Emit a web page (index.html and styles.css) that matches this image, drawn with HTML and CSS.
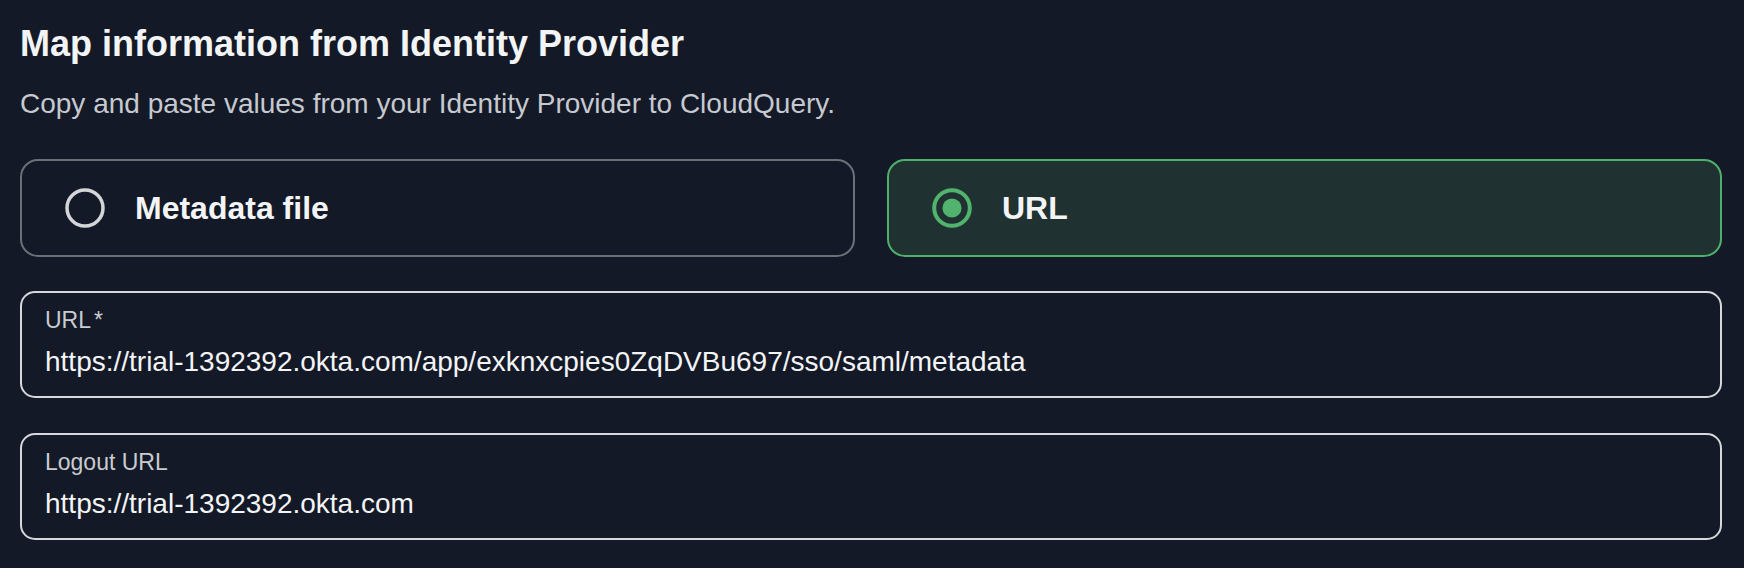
FILE: index.html
```html
<!DOCTYPE html>
<html lang="en">
<head>
<meta charset="utf-8">
<title>Map information from Identity Provider</title>
<link rel="stylesheet" href="styles.css">
</head>
<body>
<main class="page">
  <h1 class="title">Map information from Identity Provider</h1>
  <p class="subtitle">Copy and paste values from your Identity Provider to CloudQuery.</p>

  <div class="options">
    <label class="option">
      <svg class="radio" viewBox="0 0 40 40" width="40" height="40" aria-hidden="true">
        <circle cx="20" cy="20" r="18" fill="none" stroke="#d4d5d8" stroke-width="3.5"/>
      </svg>
      <span class="option-text">Metadata file</span>
    </label>
    <label class="option option-selected">
      <svg class="radio" viewBox="0 0 40 40" width="40" height="40" aria-hidden="true">
        <circle cx="20" cy="20" r="17.8" fill="none" stroke="#52b36e" stroke-width="4"/>
        <circle cx="20" cy="20" r="9.6" fill="#52b36e"/>
      </svg>
      <span class="option-text">URL</span>
    </label>
  </div>

  <div class="field field-first">
    <div class="field-label">URL<span class="req">*</span></div>
    <div class="field-value">https://trial-1392392.okta.com/app/exknxcpies0ZqDVBu697/sso/saml/metadata</div>
  </div>

  <div class="field">
    <div class="field-label">Logout URL</div>
    <div class="field-value">https://trial-1392392.okta.com</div>
  </div>
</main>
</body>
</html>
```

FILE: styles.css
```css
html, body {
  margin: 0;
  padding: 0;
  background: #131926;
}

body {
  font-family: "Liberation Sans", Arial, Helvetica, sans-serif;
  color: #f3f4f6;
}

.page {
  padding: 22px 22px 0 20px;
}

.title {
  margin: 0;
  font-size: 36px;
  line-height: 44px;
  font-weight: 700;
  color: #f3f4f6;
}

.subtitle {
  margin: 20px 0 0;
  font-size: 28px;
  line-height: 36px;
  color: #c6c9cf;
}

.options {
  margin-top: 37px;
  display: grid;
  grid-template-columns: 1fr 1fr;
  gap: 32px;
}

.option {
  box-sizing: border-box;
  height: 98px;
  display: flex;
  align-items: center;
  gap: 30px;
  padding-left: 43px;
  border: 2px solid #6b7079;
  border-radius: 18px;
  background: #131926;
}

.option-selected {
  border-color: #4fb06b;
  background: #1f3131;
}

.radio {
  flex: none;
  display: block;
}

.option-text {
  font-size: 32px;
  line-height: 32px;
  font-weight: 700;
  color: #f3f4f6;
}

.field {
  box-sizing: border-box;
  height: 107px;
  margin-top: 35px;
  padding: 13px 23px 0;
  border: 2px solid #d6d7da;
  border-radius: 15px;
}

.field-first {
  margin-top: 34px;
}

.field-label {
  font-size: 23px;
  line-height: 28px;
  color: #c9ccd1;
}

.req {
  margin-left: 3px;
}

.field-value {
  margin-top: 11px;
  font-size: 28px;
  line-height: 34px;
  color: #f3f4f6;
}
```
